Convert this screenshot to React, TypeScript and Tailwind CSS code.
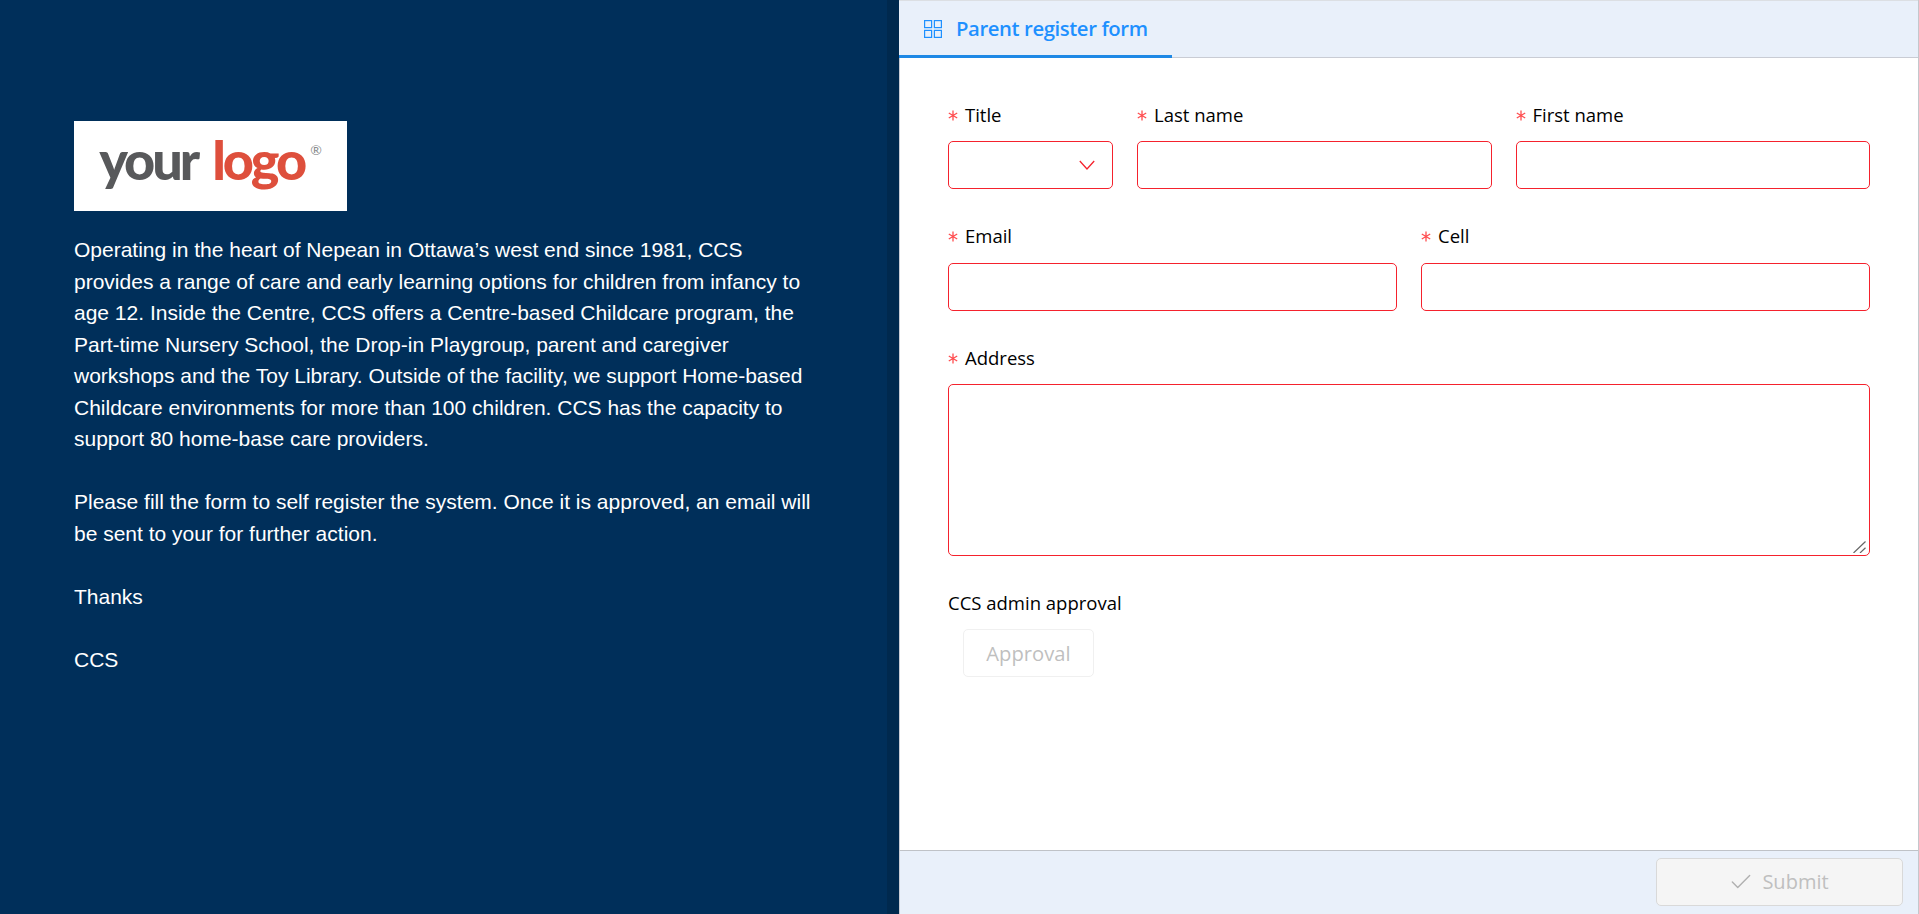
import { Check } from 'lucide-react';

const inputCls = 'w-full h-12 rounded-[5px] border border-[#f5222d] bg-white outline-none';

const Field = ({ label, required = true, className = '', labelClass = 'mb-[13px]', children }: any) => (
  <div className={className}>
    <div className={`h-[26px] flex items-center text-[18.5px] text-black ${labelClass}`}>
      {required && (
        <svg width="10" height="11" viewBox="0 0 10 11" className="mr-[7px] mt-[1px] text-[#ff4d4f]" fill="none" stroke="currentColor" strokeWidth="1.3">
          <path d="M5 0.5V10.5M0.8 3L9.2 8M9.2 3L0.8 8" />
        </svg>
      )}
      {label}
    </div>
    {children}
  </div>
);

export default function App() {
  return (
    <div className="w-full h-[914px] flex overflow-hidden font-['Open_Sans',sans-serif]">
      <div className="w-[887px] bg-[#002f5a] pl-[74px] pr-[60px] pt-[121px] font-['Liberation_Sans',sans-serif] text-white text-[21px] leading-[31.5px]">
        <div className="w-[273px] h-[90px] bg-white flex items-center justify-center pb-3 font-['Lato',sans-serif] font-black text-[54px] leading-none tracking-[-3px] mb-[23px]">
          <span className="text-[#58595b]">your</span>
          <span className="text-[#de4f3c] ml-[15px]">logo</span>
          <span className="text-[#8a8c8e] text-[14px] font-normal tracking-normal self-start mt-[22px] ml-[6px]">®</span>
        </div>
        <p>
          Operating in the heart of Nepean in Ottawa’s west end since 1981, CCS provides a range of care and early
          learning options for children from infancy to age 12. Inside the Centre, CCS offers a Centre-based Childcare
          program, the Part-time Nursery School, the Drop-in Playgroup, parent and caregiver workshops and the Toy
          Library. Outside of the facility, we support Home-based Childcare environments for more than 100 children.
          CCS has the capacity to support 80 home-base care providers.
        </p>
        <p className="mt-[31.5px]">
          Please fill the form to self register the system. Once it is approved, an email will be sent to your for
          further action.
        </p>
        <p className="mt-[31.5px]">Thanks</p>
        <p className="mt-[31.5px]">CCS</p>
      </div>
      <div className="w-3 bg-[#00294e]" />
      <div className="flex-1 flex flex-col bg-white border-r border-[#c4c7cc]">
        <div className="h-[58px] bg-[#e9f0fa] border-t border-[#dcdfe3] border-b border-b-[#c9ccd4] flex shrink-0">
          <div className="w-[273px] h-[57px] -mb-px border-b-[3px] border-[#1e88e5] flex items-center pl-[25px] pt-[1px] text-[#1e90ff] text-[20.3px] font-semibold tracking-[-0.4px]">
            <svg width="18" height="18" viewBox="0 0 18 18" fill="none" stroke="currentColor" strokeWidth="1.2" className="mr-[14px]">
              <rect x="0.6" y="0.6" width="7" height="7" />
              <rect x="10.4" y="0.6" width="7" height="7" />
              <rect x="0.6" y="10.4" width="7" height="7" />
              <rect x="10.4" y="10.4" width="7" height="7" />
            </svg>
            Parent register form
          </div>
        </div>
        <div className="flex-1 pl-[48px] pr-[48px] pt-[44px] border-l border-[#c9ccd4]">
          <div className="flex gap-6 mb-[34px]">
            <Field label="Title" className="w-[165px] mt-px" labelClass="mb-[13px] -mt-px">
              <div className={`${inputCls} flex items-center justify-end pr-[17px]`}>
                <svg width="16" height="10" viewBox="0 0 16 10" fill="none" stroke="#f5222d" strokeWidth="1.3">
                  <path d="M0.8 1L8 9L15.2 1" />
                </svg>
              </div>
            </Field>
            <Field label="Last name" className="flex-1 mt-px" labelClass="mb-[13px] -mt-px">
              <input className={inputCls} />
            </Field>
            <Field label="First name" className="flex-1 mt-px" labelClass="mb-[13px] -mt-px">
              <input className={inputCls} />
            </Field>
          </div>
          <div className="flex gap-6 mb-[34px]">
            <Field label="Email" className="flex-1" labelClass="mb-[14px]">
              <input className={inputCls} />
            </Field>
            <Field label="Cell" className="flex-1" labelClass="mb-[14px]">
              <input className={inputCls} />
            </Field>
          </div>
          <Field label="Address" className="mb-[34px]">
            <div className="relative">
              <textarea className="block w-full h-[172px] resize-none rounded-[5px] border border-[#f5222d] outline-none" />
              <svg width="13" height="12" viewBox="0 0 13 12" fill="none" stroke="#666666" strokeWidth="1.2" className="absolute right-1 bottom-[3px]">
                <path d="M0.5 12L12.5 0.5M7 12L12.5 6.8" />
              </svg>
            </div>
          </Field>
          <Field label="CCS admin approval" required={false}>
            <div className="ml-[15px] w-[131px] h-12 rounded-[5px] border border-[#f0f0f0] flex items-center justify-center text-[#bfbfbf] text-[20.2px]">
              Approval
            </div>
          </Field>
        </div>
        <div className="h-[64px] shrink-0 bg-[#e9f0fa] border-t border-[#bfc2c7] border-l border-l-[#c9ccd4] flex justify-end pt-[7px] pr-[15px]">
          <div className="w-[247px] h-12 rounded-[5px] border border-[#d9d9d9] bg-[#f5f5f5] flex items-center justify-center text-[#bfbfbf] text-[20px]">
            <Check size={26} strokeWidth={1.3} className="mr-[8px] -ml-[2px] text-[#b0b0b0]" />
            Submit
          </div>
        </div>
      </div>
    </div>
  );
}
